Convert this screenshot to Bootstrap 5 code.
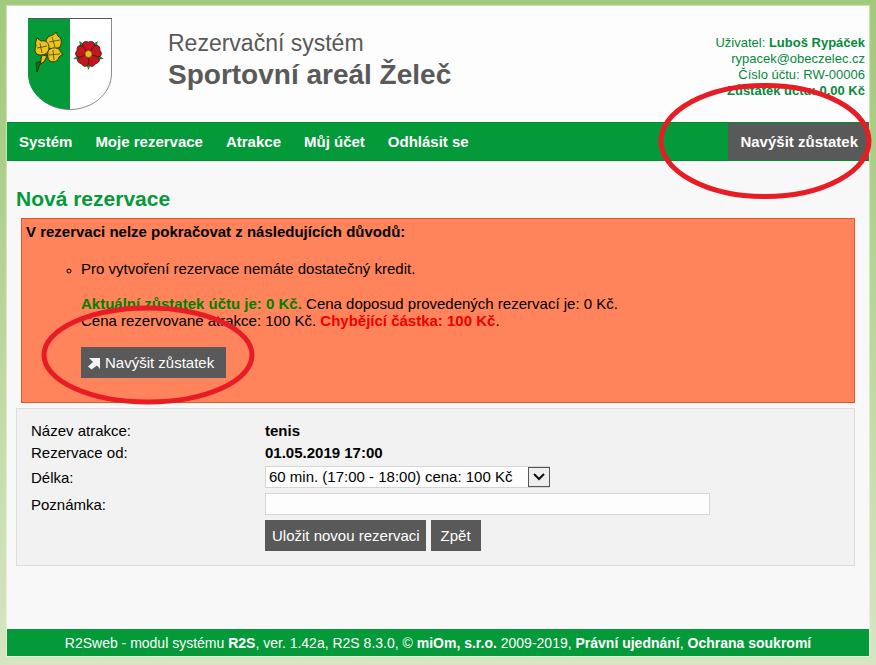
<!DOCTYPE html>
<html lang="cs">
<head>
<meta charset="utf-8">
<meta name="viewport" content="width=device-width, initial-scale=1">
<title>Rezervační systém – Sportovní areál Želeč</title>
<link href="https://cdn.jsdelivr.net/npm/bootstrap@5.3.0/dist/css/bootstrap.min.css" rel="stylesheet">
<style>
  :root { --r2-green: #049a39; --r2-gray: #595959; }
  body {
    font-family: "Liberation Sans", Arial, sans-serif;
    font-size: 15px; line-height: 17px; color: #000;
    background: linear-gradient(#a2c97b, #a9cd84 20%, #cadfb0 75%, #d6e5c2) no-repeat #d6e5c2;
    padding: 6px 7px 9px;
  }
  a { color: inherit; text-decoration: none; }
  .site { min-height: calc(100vh - 15px); background: #f8f8f8; box-shadow: 0 0 1px 1px #ffffff66; }
  .site-head { background: #fdfdfd; height: 116px; padding: 11px 4px 0 20px; }
  .crest { width: 86px; height: 94px; }
  .brand-text { padding: 10px 0 0 55px; color: var(--r2-gray); font-size: 23px; line-height: 32px; }
  .brand-text strong { font-size: 28px; }
  .account { color: #078a3c; font-size: 13px; line-height: 16px; padding-top: 18px; }
  .main-nav { background: var(--r2-green); min-height: 39px; color: #fff; font-weight: 700; border-top: 1px solid #078a33; border-bottom: 1px solid #078a33; }
  .main-nav .nav-link { padding: 10px 11px 10px 12px; color: #fff; }
  .main-nav .topup { background: var(--r2-gray); }
  .content { padding: 26px 14px 0 9px; }
  h1 { font-size: 21px; line-height: 24px; font-weight: 700; color: var(--r2-green); margin: 0 0 7px; }
  .stop { background: #ff845c; border: 1px solid #e1582b; margin: 0 0 5px 5px; padding: 4px 4px 24px; }
  .stop ul { list-style: circle; padding-left: 55px; margin: 20px 0 0; }
  .stop li::marker { font-size: 12px; }
  .stop .detail { margin: 18px 0; }
  .c-ok { color: #008000; }
  .c-miss { color: #f00000; }
  .gbtn { background: var(--r2-gray); color: #fff; border: 0; border-radius: 0; font-size: 15px; line-height: 17px; padding: 7px 6px 7px 7px; }
  .gbtn:hover { background: #444; color: #fff; }
  .gbtn.wide { padding: 7px 10px; }
  .gbtn.go { padding: 7px 12px 7px 6px; }
  .booking { background: #f2f2f2; border: 1px solid #dedede; padding: 11px 14px 14px; }
  .fields { display: grid; grid-template-columns: 234px minmax(0, 1fr); }
  .fields > * { min-height: 22px; line-height: 22px; }
  .fields .tall { min-height: 27px; line-height: 24px; padding-top: 2px; }
  .field { height: 22px; border: 1px solid #d6d6d6; border-radius: 0; background: #fdfdfd; color: #000; font-size: 15px; line-height: 20px; padding: 0 3px; }
  select.field { appearance: none; width: 285px; padding: 0 24px 0 3px; display: block; }
  .arrow { position: absolute; top: 1px; right: 0; width: 22px; height: 20px; pointer-events: none; }
  input.field { width: 445px; max-width: 100%; display: block; }
  .actions { gap: 5px; padding-top: 2px; }
  .site-foot { background: var(--r2-green); color: #fff; min-height: 27px; padding: 6px 5px 4px; font-size: 14px; line-height: 17px; text-align: center; }
  /* hand-drawn highlights lying over the page */
  .ring { position: absolute; pointer-events: none; z-index: 5; fill: none; stroke: #e81c24; stroke-width: 5; }
  .ring-nav { width: 214px; height: 118px; right: -3px; top: -41px; }
  .ring-btn { width: 214px; height: 100px; left: -40px; top: -42px; }
</style>
<script src="https://cdn.jsdelivr.net/npm/bootstrap@5.3.0/dist/js/bootstrap.bundle.min.js"></script>
</head>
<body>
<div class="site d-flex flex-column">
  <header class="site-head d-flex align-items-start">
    <svg class="crest flex-shrink-0" viewBox="0 0 86 94" role="img" aria-label="Znak obce Želeč">
      <path d="M1.500 1.500H84.500V56C84.500 78 64 92.500 43 92.500S1.500 78 1.500 56Z" fill="#fff" stroke="#8a8a8a"/>
      <path d="M1 1.500H43V92.500C22 92.500 1 78 1 56Z" fill="#049a39"/>
      <path d="M1 1.500H85" stroke="#555"/>
      <path d="M19 33L15 43L12 48M22 36L17 42M12 45L10 55" fill="none" stroke="#173f16" stroke-width="1.700"/>
      <g fill="#e8c41c" stroke="#3a3608" stroke-width="1" stroke-linejoin="round">
        <path d="M29 15L31 19C35 21 35 26 33 30C29 32 24 33 20 30C17 28 19 23 21 20C24 18 27 19 29 15Z"/>
        <path d="M10 21L14 24C19 23 22 26 22 31C22 36 18 38 13 38C8 38 7 33 9 29C8 26 9 24 10 21Z"/>
        <path d="M36 37L32 40C31 44 27 46 23 44C20 42 21 38 21 34C24 30 30 30 33 33C33 35 34 36 36 37Z"/>
        <path d="M15 38L20 39L17 45L13 47Z"/>
        <path d="M9 46L14 44L10 55Z" fill="#0b7329"/>
        <path d="M22 25L33 23M25 20L28 30M10 31L20 29M13 26L15 36M22 38L33 37M26 33L27 43" fill="none" stroke-width=".7"/>
      </g>
      <g transform="translate(61.500 37)">
        <g fill="#18893d"><path id="leaf" d="M-3 9L0 16L3 9Z"/><use href="#leaf" transform="rotate(72)"/><use href="#leaf" transform="rotate(144)"/><use href="#leaf" transform="rotate(216)"/><use href="#leaf" transform="rotate(288)"/></g>
        <g fill="#c5161f" stroke="#4c1010" stroke-width=".8"><path id="petal" d="M0 -2L-4 -5C-8 -10 -5 -14 0 -12C5 -14 8 -10 4 -5Z"/><use href="#petal" transform="rotate(72)"/><use href="#petal" transform="rotate(144)"/><use href="#petal" transform="rotate(216)"/><use href="#petal" transform="rotate(288)"/></g>
        <circle r="3.500" fill="#e5bd20" stroke="#6b4a0c" stroke-width=".7"/>
      </g>
    </svg>
    <div class="brand-text flex-grow-1"><div>Rezervační systém</div><strong>Sportovní areál Želeč</strong></div>
    <div class="account text-end">
      <div>Uživatel: <b>Luboš Rypáček</b></div>
      <div>rypacek@obeczelec.cz</div>
      <div>Číslo účtu: RW-00006</div>
      <div><b>Zůstatek účtu: 0,00 Kč</b></div>
    </div>
  </header>
  <nav class="main-nav d-flex position-relative">
    <a class="nav-link" href="#">Systém</a>
    <a class="nav-link" href="#">Moje rezervace</a>
    <a class="nav-link" href="#">Atrakce</a>
    <a class="nav-link" href="#">Můj účet</a>
    <a class="nav-link" href="#">Odhlásit se</a>
    <a class="nav-link topup ms-auto" href="#">Navýšit zůstatek</a>
    <svg class="ring ring-nav" viewBox="0 0 214 118" aria-hidden="true"><ellipse cx="107" cy="59" rx="104" ry="55.500"/></svg>
  </nav>
  <main class="content flex-grow-1">
    <h1>Nová rezervace</h1>
    <section class="stop">
      <b>V rezervaci nelze pokračovat z následujících důvodů:</b>
      <ul><li>Pro vytvoření rezervace nemáte dostatečný kredit.
        <div class="detail"><b class="c-ok">Aktuální zůstatek účtu je: 0 Kč.</b> Cena doposud provedených rezervací je: 0 Kč.<br>
        Cena rezervované atrakce: 100 Kč. <b class="c-miss">Chybějící částka: 100 Kč</b>.</div>
        <div class="position-relative">
          <a class="btn gbtn go d-inline-flex align-items-center gap-1" href="#"><svg width="14" height="14" viewBox="0 0 14 14" aria-hidden="true"><path d="M2 2H13V13L10 9.500L4.500 13.500L1 10.500L6 6Z" fill="#f4f4f4"/></svg>Navýšit zůstatek</a>
          <svg class="ring ring-btn" viewBox="0 0 214 100" aria-hidden="true"><ellipse cx="107" cy="50" rx="104" ry="47"/></svg>
        </div>
      </li></ul>
    </section>
    <form class="booking">
      <div class="fields">
        <span>Název atrakce:</span><b>tenis</b>
        <span>Rezervace od:</span><b>01.05.2019 17:00</b>
        <label class="tall" for="len">Délka:</label>
        <div class="tall"><div class="position-relative d-inline-block align-top">
          <select class="field" id="len"><option>60 min. (17:00 - 18:00) cena: 100 Kč</option></select>
          <svg class="arrow" viewBox="0 0 22 20" aria-hidden="true"><rect x=".5" y=".5" width="21" height="19" fill="#eee" stroke="#555"/><path d="M6 7L11 12L16 7" fill="none" stroke="#111" stroke-width="2"/></svg>
        </div></div>
        <label class="tall" for="note">Poznámka:</label>
        <div class="tall"><input class="field" id="note" type="text"></div>
      </div>
      <div class="fields">
        <span></span>
        <div class="d-flex actions"><button class="btn gbtn" type="submit">Uložit novou rezervaci</button><button class="btn gbtn wide" type="button">Zpět</button></div>
      </div>
    </form>
  </main>
  <footer class="site-foot">R2Sweb - modul systému <b>R2S</b>, ver. 1.42a, R2S 8.3.0, © <a href="#"><b>miOm, s.r.o.</b></a> 2009-2019, <a href="#"><b>Právní ujednání</b></a>, <a href="#"><b>Ochrana soukromí</b></a></footer>
</div>
</body>
</html>
